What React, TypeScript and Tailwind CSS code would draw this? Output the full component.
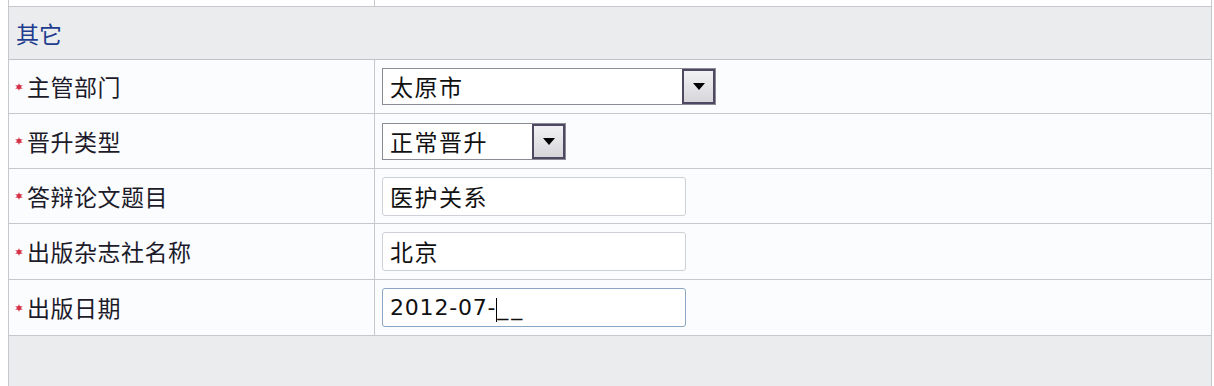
import React from "react";

const font = { fontFamily: '"Noto Sans CJK SC", "Noto Sans", sans-serif' };

function Star() {
  return (
    <svg width="8" height="8" viewBox="0 0 10 10" className="mr-[4px] shrink-0">
      <path d="M5 0 L6.2 3.3 L9.8 2.6 L7.3 5 L9.8 7.4 L6.2 6.7 L5 10 L3.8 6.7 L0.2 7.4 L2.7 5 L0.2 2.6 L3.8 3.3 Z" fill="#d4334a" />
      <circle cx="5" cy="5" r="2.8" fill="#d4334a" />
    </svg>
  );
}

function DropButton() {
  return (
    <div className="h-full w-[33px] border-2 border-[#4f4862] bg-gradient-to-b from-[#f2f2f4] to-[#d6d6da] flex items-center justify-center">
      <svg width="12" height="7" viewBox="0 0 12 7">
        <path d="M0 0 H12 L6 7 Z" fill="#000" />
      </svg>
    </div>
  );
}

function Select({ value, width }: { value: string; width: string }) {
  return (
    <div className={`${width} h-[37px] border border-[#8b8b96] bg-white flex items-stretch`}>
      <div className="flex-1 flex items-center pl-[7px] text-[23px] tracking-[1.5px] text-[#111]">{value}</div>
      <DropButton />
    </div>
  );
}

function Input({ value, focused }: { value: React.ReactNode; focused?: boolean }) {
  return (
    <div
      className={`w-[304px] h-[39px] rounded-[3px] border bg-white flex items-center pl-[7px] text-[23px] tracking-[1.5px] text-[#111] ${
        focused ? "border-[#8aa6c4]" : "border-[#cdd0d6]"
      }`}
    >
      {value}
    </div>
  );
}

function Row({ label, h, children }: { label: string; h: string; children: React.ReactNode }) {
  return (
    <div className={`${h} grid grid-cols-[366px_1fr] border-b border-[#c6c8cc] bg-[#fbfcfe]`}>
      <div className="flex items-center pl-[6px] border-r border-[#c6c8cc] text-[23px] text-[#1d1b2a]">
        <Star />
        <span className="tracking-[0.5px]">{label}</span>
      </div>
      <div className="flex items-center pl-[7px]">{children}</div>
    </div>
  );
}

export default function App() {
  return (
    <div className="w-[1214px] h-[386px] bg-white overflow-hidden pl-[8px] pr-[2px]" style={font}>
      <div className="h-full flex flex-col border-l border-r border-[#c6c8cc]">
        <div className="h-[7px] grid grid-cols-[366px_1fr] border-b border-[#c6c8cc] bg-white">
          <div className="border-r border-[#c6c8cc]" />
          <div />
        </div>
        <div className="h-[53px] bg-[#ebecee] border-b border-[#c0c2c6] flex items-center pl-[7px] text-[23px] text-[#1e3d8e]">
          其它
        </div>
        <Row label="主管部门" h="h-[54px]">
          <Select value="太原市" width="w-[334px]" />
        </Row>
        <Row label="晋升类型" h="h-[55px]">
          <Select value="正常晋升" width="w-[184px]" />
        </Row>
        <Row label="答辩论文题目" h="h-[55px]">
          <Input value="医护关系" />
        </Row>
        <Row label="出版杂志社名称" h="h-[56px]">
          <Input value="北京" />
        </Row>
        <Row label="出版日期" h="h-[56px]">
          <Input
            focused
            value={
              <span className="flex items-center" style={{ fontFamily: '"DejaVu Sans", sans-serif' }}>
                <span className="text-[22px] tracking-[0.8px]">2012-07-</span>
                <span className="w-[1px] h-[24px] bg-black mt-[4px]" />
                <span className="text-[22px] tracking-[3px]">__</span>
              </span>
            }
          />
        </Row>
        <div className="flex-1 bg-[#ebecee]" />
      </div>
    </div>
  );
}
